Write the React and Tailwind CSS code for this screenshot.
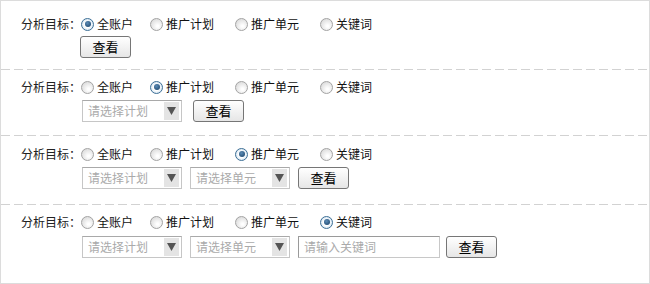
const OPTIONS = [
  { label: "全账户", width: "w-[69px]" },
  { label: "推广计划", width: "w-[85px]" },
  { label: "推广单元", width: "w-[85px]" },
  { label: "关键词", width: "w-[60px]" },
];

function Radio({ checked }) {
  if (checked) {
    return (
      <span className="flex h-[13px] w-[13px] shrink-0 items-center justify-center rounded-full border border-[#3d6f96] bg-[radial-gradient(circle,#ffffff_40%,#b9d3e8_100%)]">
        <span className="h-[6px] w-[6px] rounded-full bg-[radial-gradient(circle_at_40%_35%,#5a8ab5,#163f66)]" />
      </span>
    );
  }
  return (
    <span className="h-[13px] w-[13px] shrink-0 rounded-full border border-[#a3a3a3] bg-[radial-gradient(circle_at_60%_65%,#ffffff_10%,#d6d6d6_90%)]" />
  );
}

function TargetRow({ active }) {
  return (
    <div className="flex h-[20px] items-center whitespace-nowrap leading-[20px]">
      <span className="w-[60px] shrink-0 text-[#222]">分析目标：</span>
      {OPTIONS.map((opt, i) => (
        <label key={opt.label} className={`flex shrink-0 items-center ${opt.width}`}>
          <Radio checked={i === active} />
          <span className="ml-[3px] text-[#111]">{opt.label}</span>
        </label>
      ))}
    </div>
  );
}

function FakeSelect({ placeholder }) {
  return (
    <div className="flex h-[22px] w-[100px] items-center border border-[#c6c6c6] border-t-[#a9a9a9] bg-white pl-[5px] pr-[2px]">
      <span className="flex-1 text-[12px] leading-[20px] text-[#aaaaaa]">{placeholder}</span>
      <span className="flex h-[18px] w-[15px] items-center justify-center bg-[#e4e4e4]">
        <svg width="9" height="8" viewBox="0 0 9 8">
          <path d="M0 0H9L4.5 8Z" fill="#555" />
        </svg>
      </span>
    </div>
  );
}

function ViewButton({ className = "" }) {
  return (
    <button className={`h-[22px] w-[51px] rounded-[3px] border border-[#767676] bg-[linear-gradient(to_bottom,#ffffff,#e6e6e6)] text-[13px] leading-[20px] text-black ${className}`}>
      查看
    </button>
  );
}

function Dashed() {
  return <div className="h-px w-full bg-[linear-gradient(to_right,#d2d2d2_9px,transparent_9px)] bg-[length:13px_1px] bg-repeat-x" />;
}

export default function App() {
  return (
    <div className="h-[284px] w-[650px] border border-[#dcdcdc] bg-white font-['Noto_Sans_CJK_SC','Noto_Sans',sans-serif] text-[12px]">
      <section className="h-[68px] pl-[20px] pt-[13px]">
        <TargetRow active={0} />
        <div className="mt-[2px] pl-[59px]">
          <ViewButton />
        </div>
      </section>
      <Dashed />
      <section className="h-[65px] pl-[20px] pt-[7px]">
        <TargetRow active={1} />
        <div className="mt-[3px] flex pl-[61px]">
          <FakeSelect placeholder="请选择计划" />
          <ViewButton className="ml-[11px]" />
        </div>
      </section>
      <Dashed />
      <section className="h-[68px] pl-[20px] pt-[8px]">
        <TargetRow active={2} />
        <div className="mt-[3px] flex pl-[61px]">
          <FakeSelect placeholder="请选择计划" />
          <div className="ml-[8px]">
            <FakeSelect placeholder="请选择单元" />
          </div>
          <ViewButton className="ml-[8px]" />
        </div>
      </section>
      <Dashed />
      <section className="pl-[20px] pt-[7px]">
        <TargetRow active={3} />
        <div className="mt-[4px] flex pl-[61px]">
          <FakeSelect placeholder="请选择计划" />
          <div className="ml-[8px]">
            <FakeSelect placeholder="请选择单元" />
          </div>
          <div className="ml-[8px] flex h-[22px] w-[142px] items-center border border-[#c8c8c8] border-l-[#9a9a9a] border-t-[#9a9a9a] pl-[5px]">
            <span className="text-[12px] leading-[20px] text-[#aaaaaa]">请输入关键词</span>
          </div>
          <ViewButton className="ml-[6px]" />
        </div>
      </section>
    </div>
  );
}
